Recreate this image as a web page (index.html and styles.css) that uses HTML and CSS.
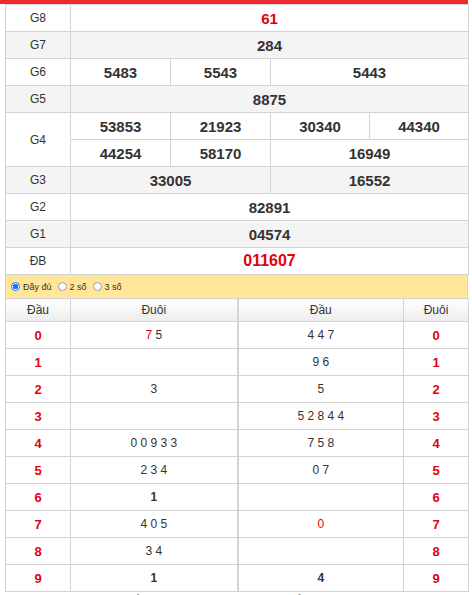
FILE: index.html
```html
<!DOCTYPE html>
<html lang="vi">
<head>
<meta charset="utf-8">
<link rel="stylesheet" href="styles.css">
</head>
<body>
<div class="wrap">
  <table class="kq">
    <colgroup><col class="c-lbl"><col class="c-n1"><col class="c-n2"><col class="c-n3"><col class="c-n4"></colgroup>
    <tr><td class="lbl">G8</td><td colspan="4" class="num red">61</td></tr>
    <tr class="alt"><td class="lbl">G7</td><td colspan="4" class="num">284</td></tr>
    <tr><td class="lbl">G6</td><td class="num">5483</td><td class="num">5543</td><td colspan="2" class="num">5443</td></tr>
    <tr class="alt"><td class="lbl">G5</td><td colspan="4" class="num">8875</td></tr>
    <tr><td class="lbl" rowspan="2">G4</td><td class="num">53853</td><td class="num">21923</td><td class="num">30340</td><td class="num">44340</td></tr>
    <tr><td class="num">44254</td><td class="num">58170</td><td colspan="2" class="num">16949</td></tr>
    <tr class="alt"><td class="lbl">G3</td><td colspan="2" class="num">33005</td><td colspan="2" class="num">16552</td></tr>
    <tr><td class="lbl">G2</td><td colspan="4" class="num">82891</td></tr>
    <tr class="alt"><td class="lbl">G1</td><td colspan="4" class="num">04574</td></tr>
    <tr><td class="lbl">ĐB</td><td colspan="4" class="num red db">011607</td></tr>
  </table>
  <div class="opts">
    <label class="opt"><span class="radio on"></span>Đầy đủ</label>
    <label class="opt"><span class="radio"></span>2 số</label>
    <label class="opt"><span class="radio"></span>3 số</label>
  </div>
  <table class="loto">
    <colgroup><col class="l1"><col class="l2"><col class="l3"><col class="l4"></colgroup>
    <tr class="head"><th>Đầu</th><th>Đuôi</th><th class="sep">Đầu</th><th>Đuôi</th></tr>
    <tr><td class="k">0</td><td class="v"><span class="r">7</span> 5</td><td class="v sep">4 4 7</td><td class="k">0</td></tr>
    <tr><td class="k">1</td><td class="v"></td><td class="v sep">9 6</td><td class="k">1</td></tr>
    <tr><td class="k">2</td><td class="v">3</td><td class="v sep">5</td><td class="k">2</td></tr>
    <tr><td class="k">3</td><td class="v"></td><td class="v sep">5 2 8 4 4</td><td class="k">3</td></tr>
    <tr><td class="k">4</td><td class="v">0 0 9 3 3</td><td class="v sep">7 5 8</td><td class="k">4</td></tr>
    <tr><td class="k">5</td><td class="v">2 3 4</td><td class="v sep">0 7</td><td class="k">5</td></tr>
    <tr><td class="k">6</td><td class="v b">1</td><td class="v sep"></td><td class="k">6</td></tr>
    <tr><td class="k">7</td><td class="v">4 0 5</td><td class="v sep"><span class="r">0</span></td><td class="k">7</td></tr>
    <tr><td class="k">8</td><td class="v">3 4</td><td class="v sep"></td><td class="k">8</td></tr>
    <tr><td class="k">9</td><td class="v b">1</td><td class="v sep b">4</td><td class="k">9</td></tr>
  </table>
  <p class="note">Xem thêm kết quả xổ số các ngày trước tại trang sổ kết quả, thống kê lô tô và đầu đuôi.</p>
</div>
</body>
</html>
```

FILE: styles.css
```css
html, body {
  margin: 0;
  padding: 0;
  background: #fff;
}
body {
  font-family: "Liberation Sans", Arial, sans-serif;
  color: #333;
}
.wrap {
  width: 463px;
  padding-left: 5px;
  border-top: 4px solid #ee2a2f;
  margin: 0;
}
table {
  border-collapse: collapse;
  width: 463px;
  table-layout: fixed;
}
.kq td {
  border: 1px solid #d4d4d4;
  height: 26px;
  padding: 0;
  text-align: center;
  vertical-align: middle;
}
.c-lbl { width: 65px; }
.c-n1 { width: 100px; }
.c-n2 { width: 100px; }
.c-n3 { width: 99px; }
.c-n4 { width: 99px; }
.kq .alt td { background: #f4f4f4; }
.lbl {
  font-size: 12px;
  color: #333;
}
.num {
  font-size: 15px;
  font-weight: bold;
  color: #333;
}
.red { color: #e3000f; }
.db { font-size: 16px; }
.opts {
  display: flex;
  align-items: center;
  gap: 6px;
  height: 23px;
  background: #ffe699;
  padding-left: 5px;
  border-left: 1px solid #d4d4d4;
  border-right: 1px solid #d4d4d4;
  box-sizing: border-box;
  font-size: 9px;
  color: #333;
}
.opt {
  display: flex;
  align-items: center;
  gap: 3px;
}
.radio {
  width: 7px;
  height: 7px;
  border-radius: 50%;
  border: 1px solid #999;
  background: #fff;
  box-sizing: content-box;
}
.radio.on {
  border-color: #1a73e8;
  background: radial-gradient(circle, #1a73e8 0 2.5px, #fff 3px);
}
.l1 { width: 65px; }
.l2 { width: 167px; }
.l3 { width: 166px; }
.l4 { width: 65px; }
.loto th {
  height: 22px;
  border: 1px solid #d4d4d4;
  background: linear-gradient(#ffffff, #ececec);
  font-size: 12px;
  font-weight: normal;
  color: #333;
  padding: 0;
}
.loto td {
  border: 1px solid #d4d4d4;
  height: 26px;
  padding: 0;
  text-align: center;
  font-size: 12px;
  color: #333;
}
.loto .sep { border-left: 2px solid #d4d4d4; }
.loto .k {
  color: #e3000f;
  font-weight: bold;
  font-size: 13px;
}
.loto .b { font-weight: bold; }
.r { color: #e3000f; }
.note {
  margin: 2px 0 0;
  font-size: 12px;
  color: #333;
  font-style: italic;
  padding-left: 20px;
}
```
